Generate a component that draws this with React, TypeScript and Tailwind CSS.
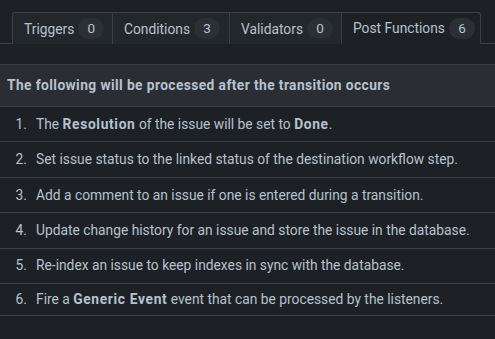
import React from "react";

const tabs = [
  { label: "Triggers", count: 0, w: "w-[100px]" },
  { label: "Conditions", count: 3, w: "w-[117px]" },
  { label: "Validators", count: 0, w: "w-[112px]" },
  { label: "Post Functions", count: 6, w: "w-[140px]", active: true },
];

const B = ({ children }: { children: React.ReactNode }) => (
  <b className="font-bold tracking-[0.65px]">{children}</b>
);

const items: React.ReactNode[] = [
  <>The <B>Resolution</B> of the issue will be set to <B>Done</B>.</>,
  <>Set issue status to the linked status of the destination workflow step.</>,
  <>Add a comment to an issue if one is entered during a transition.</>,
  <>Update change history for an issue and store the issue in the database.</>,
  <>Re-index an issue to keep indexes in sync with the database.</>,
  <>Fire a <B>Generic Event</B> event that can be processed by the listeners.</>,
];

export default function App() {
  return (
    <div
      className="w-[495px] h-[339px] overflow-hidden bg-[#1d2125] text-[#b6c2cf] text-[13.8px]"
      style={{ fontFamily: 'Roboto, "Noto Sans", sans-serif' }}
    >
      <div className="pt-[12px] flex border-b border-[#3b4046]">
        <div className="w-[12px]" />
        {tabs.map((t, i) => (
          <div
            key={t.label}
            className={
              t.w +
              " h-[32px] -mb-px shrink-0 whitespace-nowrap flex items-center gap-[4px] pl-[11px] pt-[2px] border-t border-[#3b4046] " +
              (i === 0 ? "border-l rounded-tl-[3px] " : "") +
              (t.active
                ? "bg-[#1d2125] border-l border-r rounded-tr-[3px] border-b border-b-[#1d2125]"
                : "bg-[#22272b] ") +
              (i === 1 || i === 2 ? " border-l" : "")
            }
          >
            <span className="leading-none">{t.label}</span>
            <span className="h-[21px] -mt-[2px] min-w-[26px] px-[8px] rounded-full bg-[#2c3035] flex items-center justify-center text-[13.5px]">
              {t.count}
            </span>
          </div>
        ))}
      </div>
      <div className="mt-[20px] h-[43px] bg-[#2a2e33] border-t border-b border-[#3b4046] flex items-center pl-[7px] font-bold text-[13.8px] tracking-[0.4px] whitespace-nowrap">
        The following will be processed after the transition occurs
      </div>
      <ol>
        {items.map((it, i) => (
          <li
            key={i}
            className={
              "flex items-center border-b border-[#3b4046] " +
              (i === 5 ? "h-[32px]" : "h-[35.4px]")
            }
          >
            <span className="w-[28px] text-right pr-[1px] shrink-0">{i + 1}.</span>
            <span className="pl-[8px] whitespace-nowrap">{it}</span>
          </li>
        ))}
      </ol>
    </div>
  );
}
